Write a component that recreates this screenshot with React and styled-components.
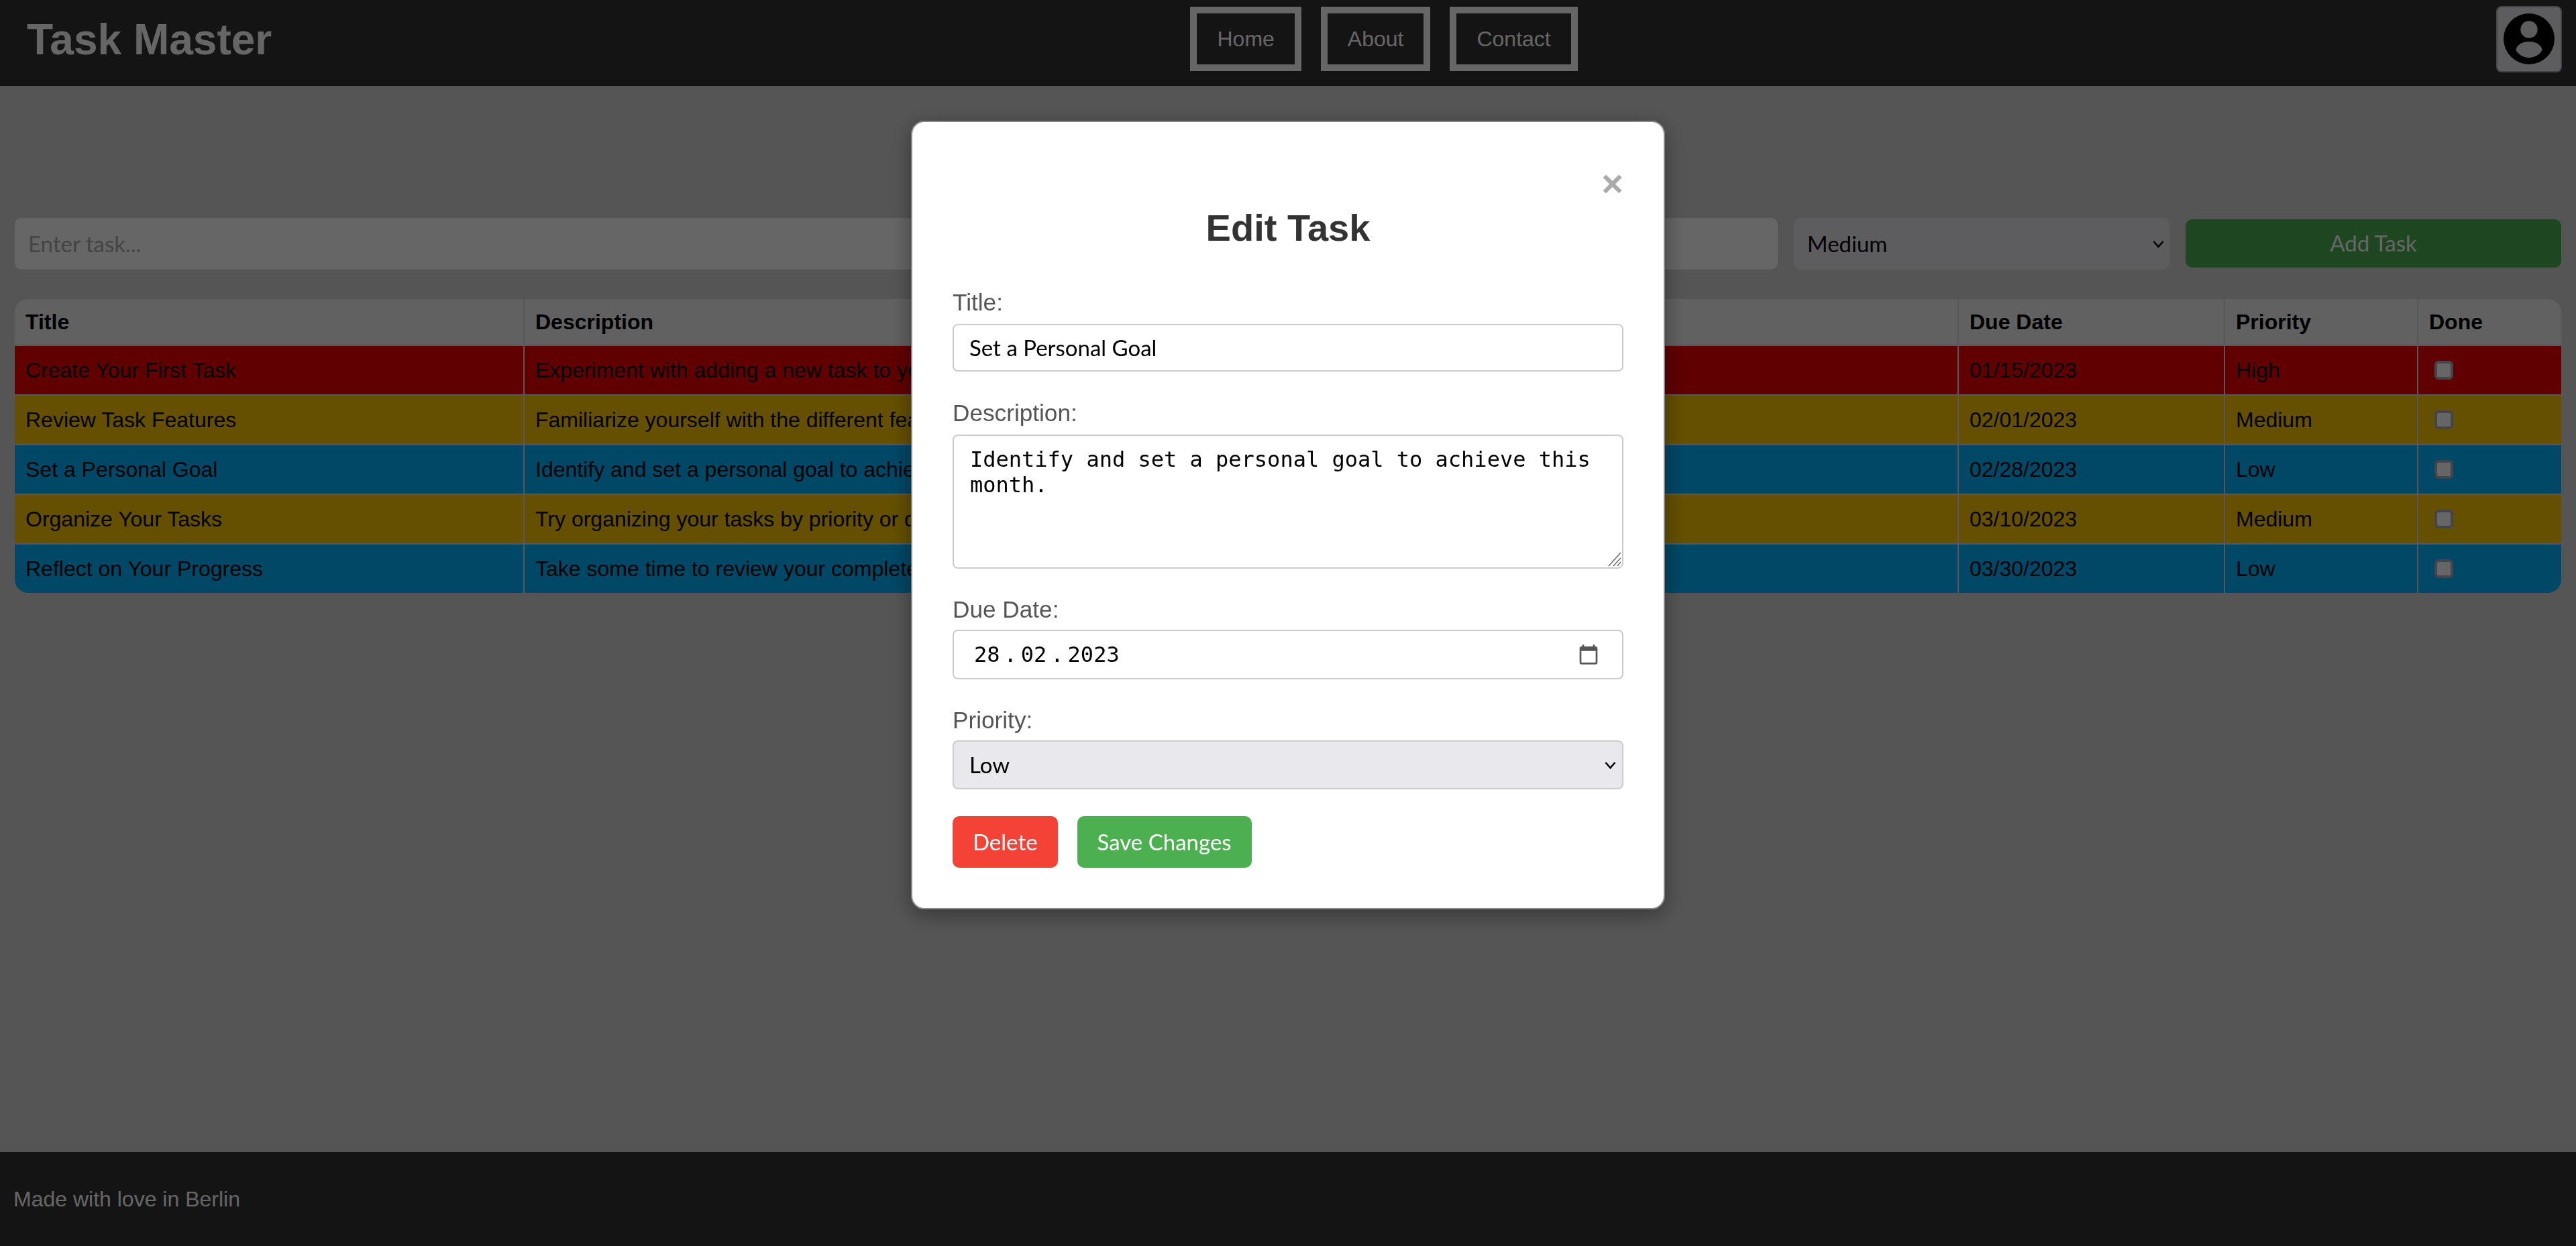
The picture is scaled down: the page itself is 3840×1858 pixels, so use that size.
import React from "react";
import styled, { createGlobalStyle } from "styled-components";

const GlobalStyle = createGlobalStyle`
  html, body {
    margin: 0;
    padding: 0;
  }
  body {
    font-family: "Liberation Sans", Arial, sans-serif;
    background: #d5d5d5;
  }
`;

const uiFont = `"Lato", "Noto Sans", sans-serif`;

const Page = styled.div`
  min-height: 1858px;
  display: flex;
  flex-direction: column;
`;

const Header = styled.header`
  height: 128px;
  background: #333;
  color: #fff;
  display: flex;
  align-items: center;
  justify-content: space-between;
  padding: 0 21px 0 40px;
`;

const Logo = styled.h1`
  margin: 0 0 10px;
  font-size: 64px;
  font-weight: bold;
  line-height: 74px;
`;

const Nav = styled.nav`
  display: flex;
  gap: 29px;
  margin-bottom: 12px;
`;

const NavLink = styled.a`
  display: block;
  height: 76px;
  line-height: 76px;
  padding: 0 30px;
  border: 10px solid #fff;
  font-size: 32px;
  color: #fff;
`;

const AvatarButton = styled.button`
  width: 98px;
  height: 99px;
  margin-bottom: 12px;
  padding: 0;
  display: flex;
  align-items: center;
  justify-content: center;
  box-sizing: border-box;
  background: #e9e9ed;
  border: 2px solid #aaaab0;
  border-radius: 8px;
`;

const AvatarIcon = styled.svg`
  width: 76px;
  height: 76px;
`;

const Main = styled.main`
  flex: 1;
  padding: 197px 22px 0;
`;

const AddRow = styled.form`
  display: flex;
  align-items: center;
  gap: 24px;
  margin-bottom: 44px;
`;

const TaskInput = styled.input`
  flex: 1;
  min-width: 0;
  box-sizing: border-box;
  height: 77px;
  padding: 0 20px 2px;
  border: none;
  border-radius: 10px;
  background: #fff;
  font-family: ${uiFont};
  font-size: 33px;
  &::placeholder {
    color: #aaa;
  }
`;

const SelectWrap = styled.div`
  position: relative;
  flex: none;
  width: ${(p) => p.$width};
`;

const Select = styled.select`
  appearance: none;
  display: block;
  width: 100%;
  height: ${(p) => p.$height}px;
  box-sizing: border-box;
  padding: 0 ${(p) => p.$inset}px 2px;
  border: ${(p) => (p.$bordered ? "2px solid #ccc" : "none")};
  border-radius: ${(p) => (p.$bordered ? 8 : 10)}px;
  background: #e9e9ed;
  font-family: ${uiFont};
  font-size: 33px;
  color: #000;
`;

const Chevron = styled.svg`
  position: absolute;
  top: 50%;
  right: ${(p) => p.$right}px;
  width: 17px;
  height: 12px;
  margin-top: -6px;
  pointer-events: none;
  fill: none;
  stroke: #000;
  stroke-width: 2.6;
`;

const AddButton = styled.button`
  flex: none;
  width: 560px;
  height: 72px;
  margin-bottom: 1px;
  padding: 0 0 2px;
  border: none;
  border-radius: 10px;
  background: #4caf50;
  color: #fff;
  font-family: ${uiFont};
  font-size: 33px;
`;

const Table = styled.table`
  width: 100%;
  table-layout: fixed;
  border-collapse: separate;
  border-spacing: 0;
  border-radius: 20px;
  overflow: hidden;
  font-size: 32px;
`;

const HeadCell = styled.th`
  height: 68px;
  padding: 0 16px;
  box-sizing: content-box;
  text-align: left;
  background: #f2f2f2;
  color: #000;
  border-right: 2px solid #ddd;
  border-bottom: 2px solid #ddd;
  &:last-child {
    border-right: none;
  }
`;

const rowColors = {
  High: "#f00000",
  Medium: "#fac800",
  Low: "#00b4ff",
};

const Cell = styled.td`
  height: 72px;
  padding: 0 16px;
  box-sizing: content-box;
  background: ${(p) => rowColors[p.$priority]};
  color: #000;
  white-space: nowrap;
  overflow: hidden;
  border-right: 2px solid #ddd;
  border-bottom: 2px solid #ddd;
  &:last-child {
    border-right: none;
  }
  tr:last-child & {
    border-bottom: none;
  }
`;

const DoneBox = styled.input`
  appearance: none;
  display: block;
  box-sizing: border-box;
  width: 28px;
  height: 28px;
  margin: 0 0 0 8px;
  background: #fff;
  border: 4px solid #aaaabe;
  border-radius: 6px;
`;

const Footer = styled.footer`
  height: 140px;
  background: #333;
  color: #fff;
  display: flex;
  align-items: center;
  padding: 0 20px;
  font-size: 32px;
`;

const Overlay = styled.div`
  position: fixed;
  inset: 0;
  background: rgba(0, 0, 0, 0.6);
`;

const Modal = styled.div`
  position: absolute;
  top: 180px;
  left: 1358px;
  width: 1124px;
  box-sizing: border-box;
  padding: 60px;
  background: #fff;
  border: 2px solid #888;
  border-radius: 20px;
  box-shadow: 0 8px 32px rgba(0, 0, 0, 0.4);
`;

const CloseRow = styled.div`
  display: flex;
  justify-content: flex-end;
  height: 64px;
`;

const CloseButton = styled.span`
  font-size: 56px;
  font-weight: bold;
  line-height: 64px;
  color: #aaa;
`;

const ModalTitle = styled.h2`
  margin: 2px 0 59px;
  text-align: center;
  font-size: 56px;
  line-height: 64px;
  font-weight: bold;
  color: #333;
`;

const Field = styled.div`
  margin-bottom: ${(p) => p.$gap ?? 41}px;
`;

const Label = styled.label`
  display: block;
  margin-bottom: ${(p) => p.$gap ?? 12}px;
  font-size: 35.2px;
  line-height: 40px;
  color: #555;
`;

const TextInput = styled.input`
  display: block;
  width: 100%;
  height: 71px;
  box-sizing: border-box;
  padding: 0 23px 2px;
  border: 2px solid #ccc;
  border-radius: 8px;
  font-family: ${uiFont};
  font-size: 33px;
  color: #000;
`;

const AreaWrap = styled.div`
  position: relative;
`;

const DescriptionArea = styled.textarea`
  display: block;
  width: 100%;
  height: 200px;
  box-sizing: border-box;
  padding: 16px 24px;
  border: 2px solid #ccc;
  border-radius: 8px;
  resize: none;
  font-family: "DejaVu Sans Mono", monospace;
  font-size: 32px;
  line-height: 38px;
  color: #000;
`;

const ResizeGrip = styled.svg`
  position: absolute;
  right: 3px;
  bottom: 3px;
  width: 20px;
  height: 22px;
  stroke: #666;
  stroke-width: 1.4;
`;

const DateBox = styled.div`
  display: flex;
  align-items: center;
  height: 74px;
  box-sizing: border-box;
  padding: 0 34px 0 30px;
  border: 2px solid #ccc;
  border-radius: 8px;
  font-family: "DejaVu Sans Mono", monospace;
  font-size: 32px;
  color: #000;
`;

const DateDot = styled.span`
  padding: 0 6px;
`;

const CalendarIcon = styled.svg`
  width: 32px;
  height: 32px;
  margin-left: auto;
  fill: #555;
`;

const ModalActions = styled.div`
  display: flex;
  gap: 29px;
`;

const ActionButton = styled.button`
  height: 77px;
  padding: 0 30px 2px;
  border: none;
  border-radius: 10px;
  background: ${(p) => (p.$danger ? "#f44336" : "#4caf50")};
  color: #fff;
  font-family: ${uiFont};
  font-size: 33px;
`;

const columns = [
  ["Title", 760],
  ["Description", 2138],
  ["Due Date", 397],
  ["Priority", 288],
  ["Done", 213],
];

const tasks = [
  {
    title: "Create Your First Task",
    description: "Experiment with adding a new task to your list.",
    due: "01/15/2023",
    priority: "High",
  },
  {
    title: "Review Task Features",
    description: "Familiarize yourself with the different features of the app.",
    due: "02/01/2023",
    priority: "Medium",
  },
  {
    title: "Set a Personal Goal",
    description: "Identify and set a personal goal to achieve this month.",
    due: "02/28/2023",
    priority: "Low",
  },
  {
    title: "Organize Your Tasks",
    description: "Try organizing your tasks by priority or due date.",
    due: "03/10/2023",
    priority: "Medium",
  },
  {
    title: "Reflect on Your Progress",
    description: "Take some time to review your completed tasks.",
    due: "03/30/2023",
    priority: "Low",
  },
];

function SelectChevron({ right }) {
  return (
    <Chevron $right={right} viewBox="0 0 17 12">
      <path d="M1.5 2 8.5 10 15.5 2" />
    </Chevron>
  );
}

export default function App() {
  return (
    <Page>
      <GlobalStyle />
      <Header>
        <Logo>Task Master</Logo>
        <Nav>
          <NavLink>Home</NavLink>
          <NavLink>About</NavLink>
          <NavLink>Contact</NavLink>
        </Nav>
        <AvatarButton>
          <AvatarIcon viewBox="0 0 76 76">
            <circle cx="38" cy="38" r="38" fill="#000" />
            <circle cx="38" cy="24" r="12.7" fill="#e9e9ed" />
            <path
              d="M18.500 55C18.500 48 27 42 38 42s19.500 6 19.500 13C53 62 46 66 38 66s-15-4-19.500-11z"
              fill="#e9e9ed"
            />
          </AvatarIcon>
        </AvatarButton>
      </Header>

      <Main>
        <AddRow>
          <TaskInput placeholder="Enter task..." />
          <SelectWrap $width="560px">
            <Select $height={77} $inset={20} defaultValue="Medium">
              <option>High</option>
              <option>Medium</option>
              <option>Low</option>
            </Select>
            <SelectChevron right={8} />
          </SelectWrap>
          <AddButton type="button">Add Task</AddButton>
        </AddRow>

        <Table>
          <colgroup>
            {columns.map(([name, width]) => (
              <col key={name} width={width} />
            ))}
          </colgroup>
          <thead>
            <tr>
              {columns.map(([name]) => (
                <HeadCell key={name}>{name}</HeadCell>
              ))}
            </tr>
          </thead>
          <tbody>
            {tasks.map((t) => (
              <tr key={t.title}>
                <Cell $priority={t.priority}>{t.title}</Cell>
                <Cell $priority={t.priority}>{t.description}</Cell>
                <Cell $priority={t.priority}>{t.due}</Cell>
                <Cell $priority={t.priority}>{t.priority}</Cell>
                <Cell $priority={t.priority}>
                  <DoneBox type="checkbox" />
                </Cell>
              </tr>
            ))}
          </tbody>
        </Table>
      </Main>

      <Footer>Made with love in Berlin</Footer>

      <Overlay>
        <Modal>
          <CloseRow>
            <CloseButton>×</CloseButton>
          </CloseRow>
          <ModalTitle>Edit Task</ModalTitle>
          <Field $gap={42}>
            <Label>Title:</Label>
            <TextInput defaultValue="Set a Personal Goal" />
          </Field>
          <Field>
            <Label>Description:</Label>
            <AreaWrap>
              <DescriptionArea defaultValue="Identify and set a personal goal to achieve this month." />
              <ResizeGrip viewBox="0 0 20 22">
                <path d="M1 21 19 1M8 21 19 9M14 21 19 15" />
              </ResizeGrip>
            </AreaWrap>
          </Field>
          <Field>
            <Label $gap={10}>Due Date:</Label>
            <DateBox>
              <span>28</span>
              <DateDot>.</DateDot>
              <span>02</span>
              <DateDot>.</DateDot>
              <span>2023</span>
              <CalendarIcon viewBox="0 0 24 24">
                <path d="M20 3h-1V1h-2v2H7V1H5v2H4c-1.1 0-2 .9-2 2v16c0 1.1.9 2 2 2h16c1.1 0 2-.9 2-2V5c0-1.1-.9-2-2-2zm0 18H4V8h16v13z" />
              </CalendarIcon>
            </DateBox>
          </Field>
          <Field $gap={40}>
            <Label $gap={10}>Priority:</Label>
            <SelectWrap>
              <Select $height={73} $inset={23} $bordered defaultValue="Low">
                <option>High</option>
                <option>Medium</option>
                <option>Low</option>
              </Select>
              <SelectChevron right={11} />
            </SelectWrap>
          </Field>
          <ModalActions>
            <ActionButton $danger>Delete</ActionButton>
            <ActionButton>Save Changes</ActionButton>
          </ModalActions>
        </Modal>
      </Overlay>
    </Page>
  );
}
